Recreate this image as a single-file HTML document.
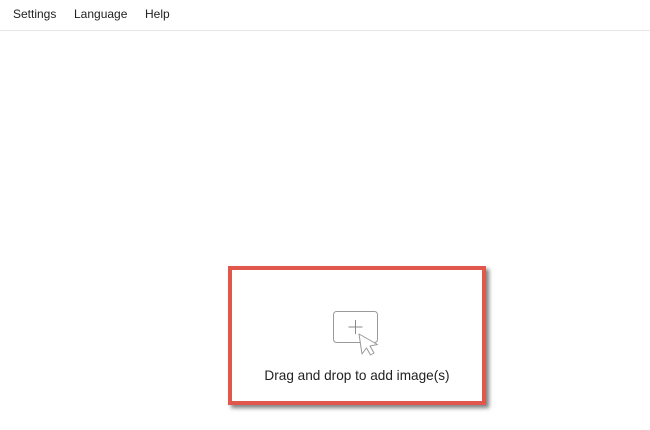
<!DOCTYPE html>
<html><head><style>
body{margin:0;width:650px;height:430px;background:#fff;font-family:"Liberation Sans",sans-serif;position:relative;overflow:hidden}
.menu{position:absolute;top:0;left:0;width:650px;height:30px;border-bottom:1px solid #e6e6e6}
.menu span{position:absolute;top:7px;font-size:12px;color:#222}
.box{position:absolute;left:228px;top:266px;width:250px;height:131px;border:4px solid #e2574c;box-shadow:3px 3px 4px rgba(0,0,0,.5)}
.txt{position:absolute;left:0;width:250px;top:98px;text-align:center;font-size:13.6px;color:#222}
</style></head><body>
<div class="menu"><span style="left:13px">Settings</span><span style="left:74px">Language</span><span style="left:145px">Help</span></div>
<div class="box">
<svg style="position:absolute;left:97px;top:37px" width="60" height="50" viewBox="0 0 60 50">
<rect x="4.5" y="4.5" width="44" height="31" rx="3" fill="none" stroke="#9a9a9a" stroke-width="1"/>
<path d="M26.5 13v14M19.5 20h14" stroke="#8a8a8a" stroke-width="1"/>
<path d="M30 27l3 20l4.5-6l4 7l3.5-2l-4-7l7.5-1.5z" fill="#fff" stroke="#9a9a9a" stroke-width="1" stroke-linejoin="round"/>
</svg>
<div class="txt">Drag and drop to add image(s)</div>
</div>
</body></html>
